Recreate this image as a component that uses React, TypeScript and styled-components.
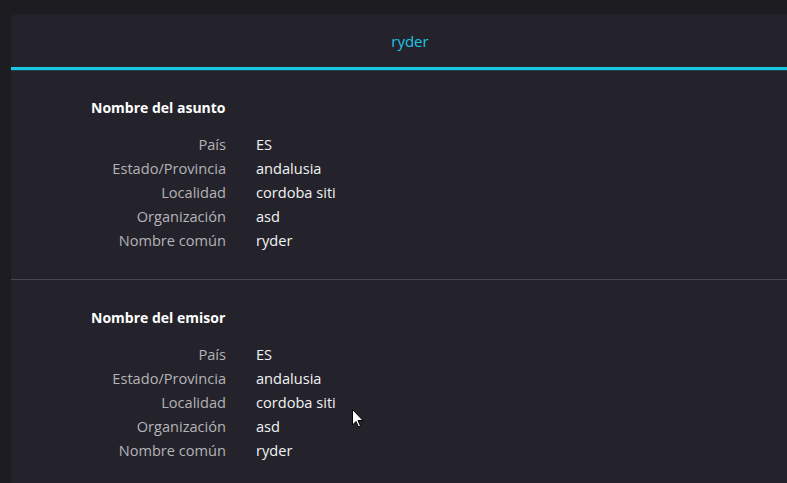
import React from "react";
import styled, { createGlobalStyle } from "styled-components";

const Global = createGlobalStyle`
  html, body { margin: 0; padding: 0; background: #1d1c21; overflow: hidden; }
  body { font-family: "Open Sans", "Noto Sans", sans-serif; }
`;

const Page = styled.div`
  width: 787px;
  height: 483px;
  overflow: hidden;
  padding: 14px 0 0 11px;
  box-sizing: border-box;
`;

const Panel = styled.div`
  width: 798px;
  height: 600px;
  background: #24232b;
  border-top-left-radius: 6px;
`;

const Header = styled.div`
  display: flex;
  align-items: center;
  justify-content: center;
  color: #1ec3e3;
  font-size: 15px;
  border-bottom: 3px solid #17c7e6;
  box-shadow: 0 1px 0 #1b3e48;
  padding-top: 1px;
  box-sizing: content-box;
  height: 52px;
`;

const Section = styled.section<{ $last?: boolean }>`
  padding: 28px 0 27px 80px;
  border-bottom: ${(p) => (p.$last ? "none" : "1px solid #48474e")};
`;

const Heading = styled.h3`
  margin: 0 0 14px;
  font-size: 14px;
  font-weight: 700;
  color: #ffffff;
  line-height: 20px;
`;

const Grid = styled.div`
  display: grid;
  grid-template-columns: 135px auto;
  column-gap: 30px;
  font-size: 14.6px;
  line-height: 24px;
`;

const Label = styled.div`
  text-align: right;
  color: #b4b3b8;
`;

const Value = styled.div`
  color: #f2f2f2;
`;

const Cursor = styled.svg`
  position: absolute;
  left: 352px;
  top: 409px;
`;

const rows: [string, string][] = [
  ["País", "ES"],
  ["Estado/Provincia", "andalusia"],
  ["Localidad", "cordoba siti"],
  ["Organización", "asd"],
  ["Nombre común", "ryder"],
];

function Block({ title, last }: { title: string; last?: boolean }) {
  return (
    <Section $last={last}>
      <Heading>{title}</Heading>
      <Grid>
        {rows.map(([k, v]) => (
          <React.Fragment key={k}>
            <Label>{k}</Label>
            <Value>{v}</Value>
          </React.Fragment>
        ))}
      </Grid>
    </Section>
  );
}

export default function App() {
  return (
    <>
      <Global />
      <Page>
        <Panel>
          <Header>ryder</Header>
          <Block title="Nombre del asunto" />
          <Block title="Nombre del emisor" last />
        </Panel>
      </Page>
      <Cursor width="12" height="19" viewBox="0 0 12 19">
        <path d="M0.5 0.5 L0.5 16 L4 12.5 L6.5 18 L8.5 17 L6 11.5 L11 11.5 Z" fill="#fff" stroke="#000" strokeWidth="1" />
      </Cursor>
    </>
  );
}
